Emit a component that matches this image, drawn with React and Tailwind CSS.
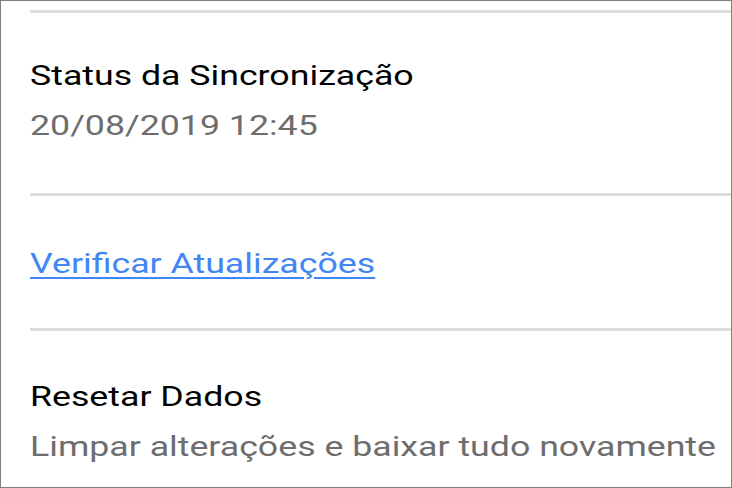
import React from 'react';

const Divider = () => <div className="h-[3px] bg-[#dedede]" />;

// the reference glyphs are rendered wider than plain Roboto, so stretch each line horizontally
const Line = ({ className = '', children }) => (
  <div className={`origin-left scale-x-[1.275] whitespace-nowrap ${className}`}>{children}</div>
);

const App = () => {
  return (
    <div className="w-[732px] h-[488px] border border-[#808080] bg-white overflow-hidden font-['Roboto',sans-serif] text-[28px] leading-[50px]">
      <div className="pl-[29px] pt-[9px]">
        <Divider />
        <div className="pt-[38px] pb-[42px]">
          <Line className="text-black">Status da Sincronização</Line>
          <Line className="text-[#6d6d6d]">20/08/2019 12:45</Line>
        </div>
        <Divider />
        <div className="pt-[43px] pb-[39px]">
          <Line>
            <a href="#" className="text-[#4285f4] underline underline-offset-[4px] decoration-[2px]">
              Verificar Atualizações
            </a>
          </Line>
        </div>
        <Divider />
        <div className="pt-[41px]">
          <Line className="text-black">Resetar Dados</Line>
          <Line className="text-[#6d6d6d]">Limpar alterações e baixar tudo novamente</Line>
        </div>
      </div>
    </div>
  );
};

export default App;
